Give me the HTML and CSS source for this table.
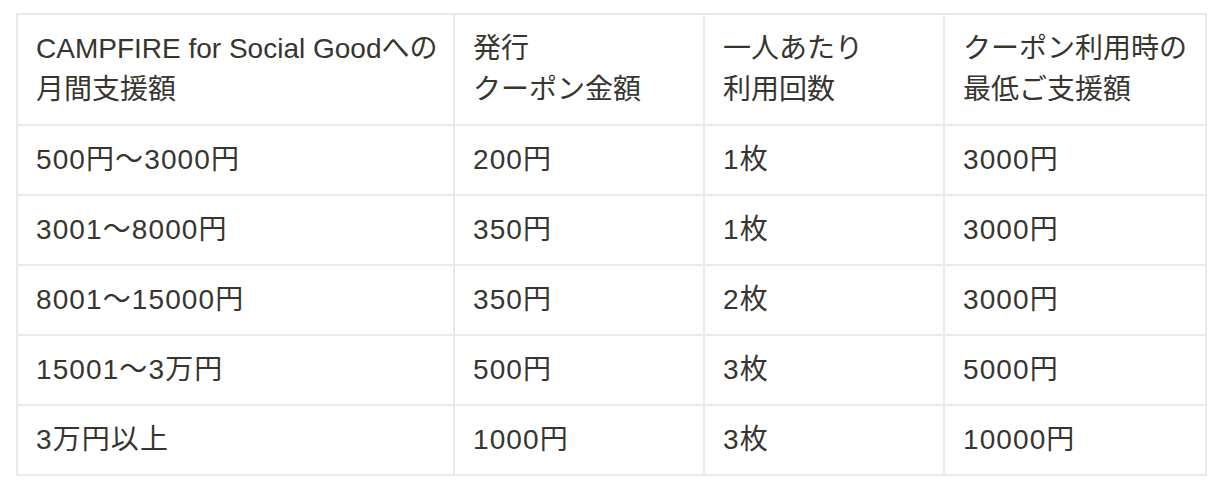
FILE: index.html
```html
<!DOCTYPE html>
<html lang="ja">
<head>
<meta charset="utf-8">
<title>クーポン表</title>
<link rel="stylesheet" href="styles.css">
</head>
<body>
<div class="table">
  <div class="cell head">CAMPFIRE for Social Goodへの<br>月間支援額</div>
  <div class="cell head">発行<br>クーポン金額</div>
  <div class="cell head">一人あたり<br>利用回数</div>
  <div class="cell head">クーポン利用時の<br>最低ご支援額</div>

  <div class="cell">500円～3000円</div>
  <div class="cell">200円</div>
  <div class="cell">1枚</div>
  <div class="cell">3000円</div>

  <div class="cell">3001～8000円</div>
  <div class="cell">350円</div>
  <div class="cell">1枚</div>
  <div class="cell">3000円</div>

  <div class="cell">8001～15000円</div>
  <div class="cell">350円</div>
  <div class="cell">2枚</div>
  <div class="cell">3000円</div>

  <div class="cell">15001～3万円</div>
  <div class="cell">500円</div>
  <div class="cell">3枚</div>
  <div class="cell">5000円</div>

  <div class="cell">3万円以上</div>
  <div class="cell">1000円</div>
  <div class="cell">3枚</div>
  <div class="cell">10000円</div>
</div>
</body>
</html>
```

FILE: styles.css
```css
html, body {
  margin: 0;
  padding: 0;
  background: #ffffff;
}

body {
  padding: 13px 16px;
  font-family: "Liberation Sans", "Noto Sans CJK JP", sans-serif;
  font-size: 28px;
  line-height: 41px;
  color: #37352f;
}

.table {
  display: grid;
  grid-template-columns: 437px 250px 240px 262px;
  width: max-content;
  border-left: 2px solid #e9e9e7;
  border-top: 2px solid #e9e9e7;
}

.cell {
  box-sizing: border-box;
  padding: 13px 18px 14px 18px;
  border-right: 2px solid #e9e9e7;
  border-bottom: 2px solid #e9e9e7;
  white-space: nowrap;
  letter-spacing: 1.1px;
}

.cell.head {
  letter-spacing: 0;
}
```
